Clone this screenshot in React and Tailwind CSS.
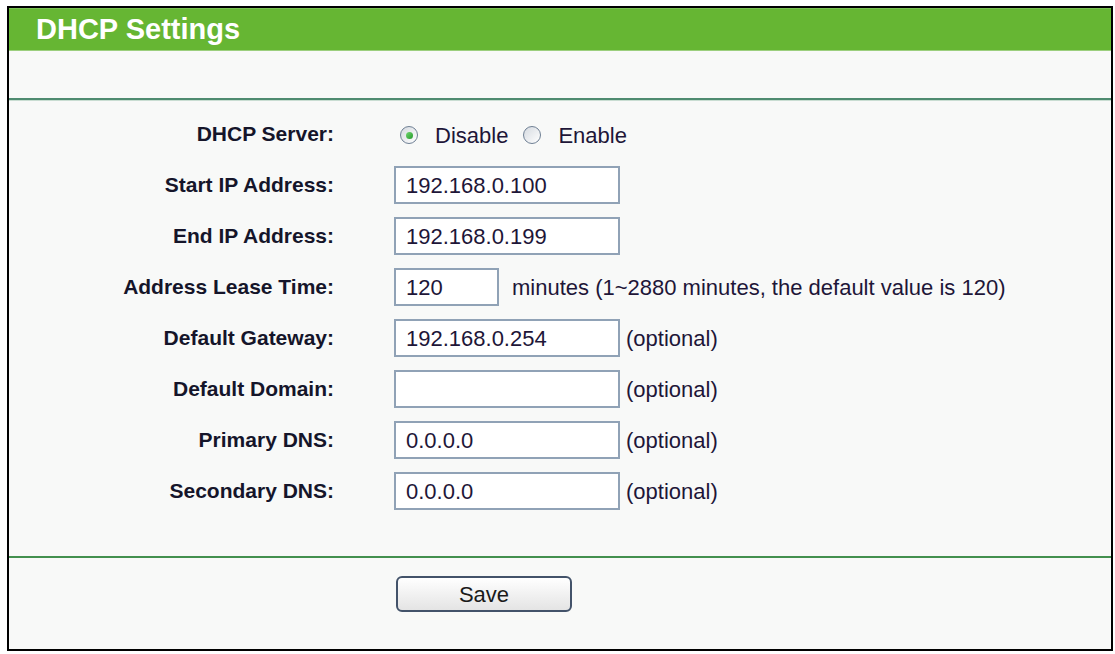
import React from "react";

const rows = [
  { label: "Start IP Address:", value: "192.168.0.100", w: "w-[226px]", suffix: null },
  { label: "End IP Address:", value: "192.168.0.199", w: "w-[226px]", suffix: null },
  { label: "Address Lease Time:", value: "120", w: "w-[105px]", suffix: "minutes (1~2880 minutes, the default value is 120)", lease: true },
  { label: "Default Gateway:", value: "192.168.0.254", w: "w-[226px]", suffix: "(optional)" },
  { label: "Default Domain:", value: "", w: "w-[226px]", suffix: "(optional)" },
  { label: "Primary DNS:", value: "0.0.0.0", w: "w-[226px]", suffix: "(optional)" },
  { label: "Secondary DNS:", value: "0.0.0.0", w: "w-[226px]", suffix: "(optional)" },
];

function Radio({ checked }) {
  return (
    <span className="relative inline-flex h-[18px] w-[18px] shrink-0 items-center justify-center rounded-full border-[1.5px] border-[#6f8094] bg-gradient-to-br from-[#d5dae0] to-[#ffffff]">
      {checked && <span className="h-[7px] w-[7px] rounded-full bg-gradient-to-br from-[#6fd66f] to-[#1f9a2a]" />}
    </span>
  );
}

function Row({ label, children }) {
  return (
    <div className="flex h-[51px] items-center">
      <div className="w-[325px] text-right text-[21px] font-bold text-[#15152a]">{label}</div>
      <div className="ml-[60px] flex items-center">{children}</div>
    </div>
  );
}

export default function App() {
  return (
    <div
      className="min-h-screen bg-white pl-[7px] pt-[6px]"
      style={{ fontFamily: '"Liberation Sans", Arial, sans-serif' }}
    >
      <div className="flex h-[645px] w-[1106px] flex-col border-2 border-black bg-[#f8f9f8]">
        <div className="flex h-[43px] items-center border-t border-[#7cc155] border-b border-b-[#9ccf7e] bg-[#66b633] pl-[27px]">
          <span className="text-[29px] font-bold leading-none text-white">DHCP Settings</span>
        </div>
        <div className="h-[47px]" />
        <div className="h-[2px] bg-[#4f8b70]" />
        <div className="h-[1px] bg-[#c9ddd2]" />
        <div className="flex h-[455px] flex-col pt-[7.5px]">
          <Row label="DHCP Server:">
            <div className="ml-[6px] flex items-center pt-[2px] text-[22px] text-[#1e1638]">
              <Radio checked />
              <span className="ml-[17px]">Disable</span>
              <span className="ml-[15px] flex items-center">
                <Radio />
              </span>
              <span className="ml-[17px]">Enable</span>
            </div>
          </Row>
          {rows.map((r) => (
            <Row key={r.label} label={r.label}>
              <div
                className={`flex h-[38px] ${r.w} items-center border-2 border-[#90a2b6] bg-white pl-[10px] text-[22px] text-[#1e1638]`}
              >
                {r.value}
              </div>
              {r.suffix && (
                <span className={`${r.lease ? "ml-[13px]" : "ml-[6px]"} text-[22px] text-[#1e1638]`}>
                  {r.suffix}
                </span>
              )}
            </Row>
          ))}
        </div>
        <div className="h-[2px] bg-[#43904f]" />
        <div className="flex-1 pt-[18px]">
          <button className="ml-[387px] flex h-[36px] w-[176px] items-center justify-center rounded-[6px] border-2 border-[#43536a] bg-gradient-to-b from-[#ffffff] to-[#e4e4e4] text-[22px] text-[#1a1a1a]">
            Save
          </button>
        </div>
      </div>
    </div>
  );
}
